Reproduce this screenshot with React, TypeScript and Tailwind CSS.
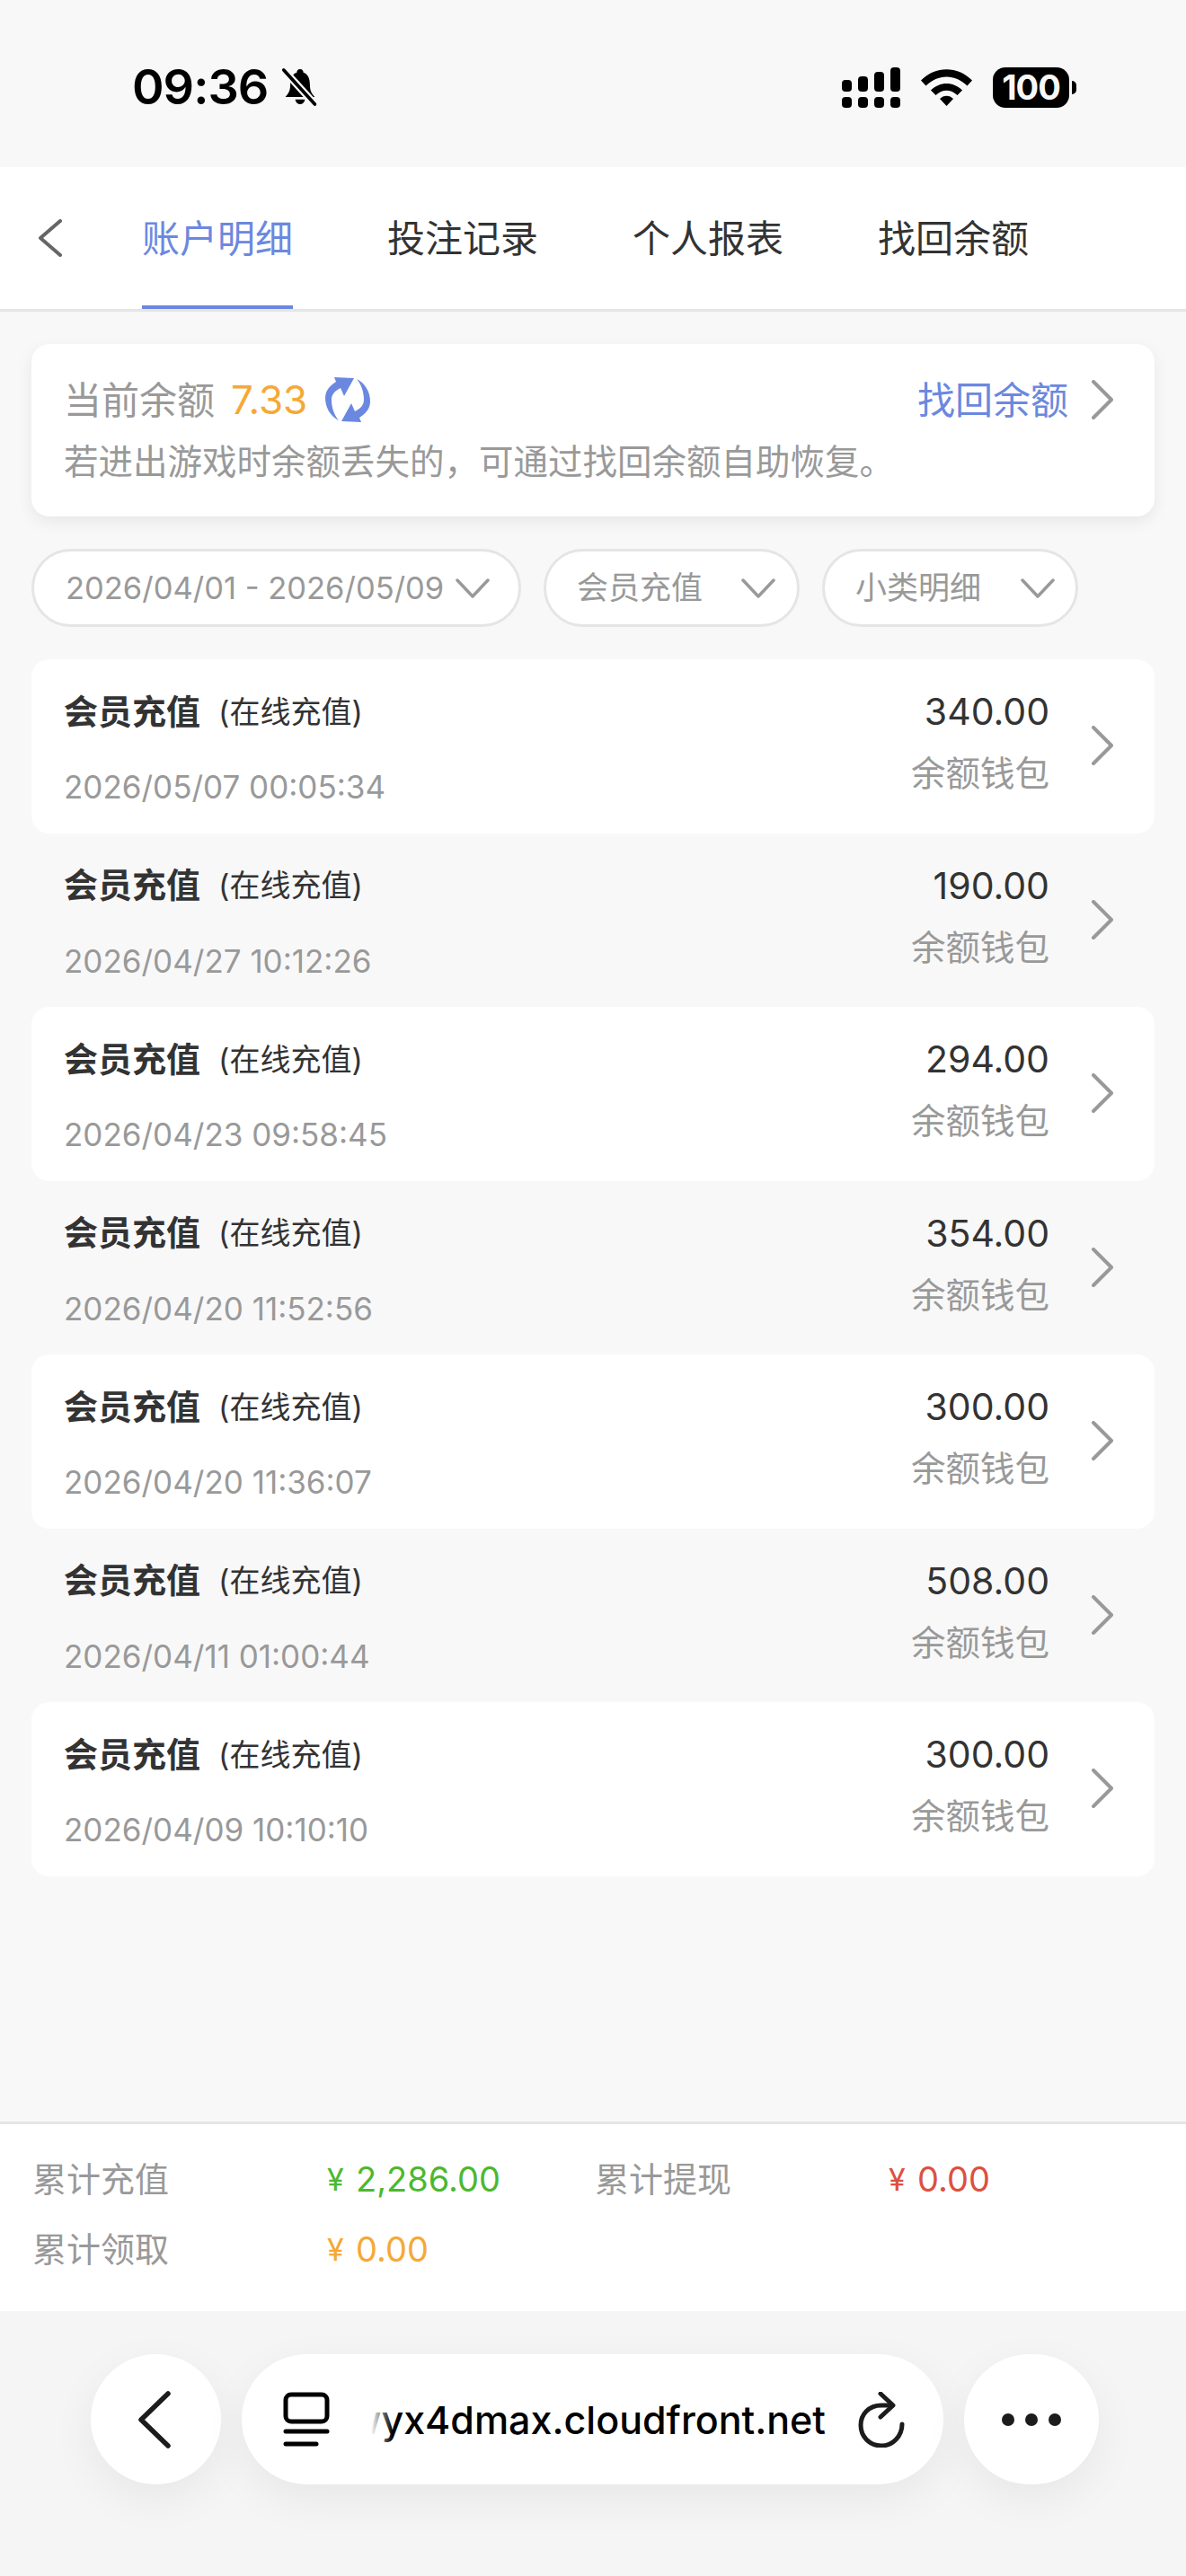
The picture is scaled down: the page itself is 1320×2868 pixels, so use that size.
const records = [
  { amount: "340.00", time: "2026/05/07 00:05:34" },
  { amount: "190.00", time: "2026/04/27 10:12:26" },
  { amount: "294.00", time: "2026/04/23 09:58:45" },
  { amount: "354.00", time: "2026/04/20 11:52:56" },
  { amount: "300.00", time: "2026/04/20 11:36:07" },
  { amount: "508.00", time: "2026/04/11 01:00:44" },
  { amount: "300.00", time: "2026/04/09 10:10:10" },
];

const tabs = ["账户明细", "投注记录", "个人报表", "找回余额"];

function ChevronRight({ className = "" }: { className?: string }) {
  return (
    <svg viewBox="0 0 26 44" className={`w-[26px] h-[44px] shrink-0 ${className}`} fill="none" stroke="#999999" strokeWidth="4" strokeLinecap="round" strokeLinejoin="round">
      <path d="M3 2 L23 22 L3 42" />
    </svg>
  );
}

function ChevronDown() {
  return (
    <svg viewBox="0 0 38 22" className="w-[38px] h-[22px] shrink-0" fill="none" stroke="#999999" strokeWidth="3.5" strokeLinecap="round" strokeLinejoin="round">
      <path d="M2 2 L19 20 L36 2" />
    </svg>
  );
}

function StatusIcons() {
  return (
    <div className="flex items-center">
      <svg viewBox="0 0 65 45" className="w-[65px] h-[45px]" fill="#000">
        <rect x="0" y="14" width="11" height="13" rx="4" />
        <rect x="18" y="10" width="11" height="17" rx="4" />
        <rect x="36" y="5" width="11" height="22" rx="4" />
        <rect x="54" y="0" width="11" height="27" rx="4" />
        <rect x="0" y="33" width="11" height="12" rx="4" />
        <rect x="18" y="33" width="11" height="12" rx="4" />
        <rect x="36" y="33" width="11" height="12" rx="4" />
        <rect x="54" y="33" width="11" height="12" rx="4" />
      </svg>
      <svg viewBox="0 0 57 41" className="w-[57px] h-[41px] ml-[23px]" fill="#000">
        <path d="M0 12.5 C16 -4 41 -4 57 12.5 L51.5 18.5 C38 5 19 5 5.5 18.5 Z" />
        <path d="M11 23.5 C21 13.5 36 13.5 46 23.5 L40.5 29 C33 22 24 22 16.5 29 Z" />
        <path d="M21 33 C25 28.5 32 28.5 36 33 L28.5 41 Z" />
      </svg>
      <div className="ml-[23px] flex items-center">
        <div className="w-[85px] h-[45px] rounded-[14px] bg-black text-[#f8f8f8] text-[38px] leading-[45px] font-bold text-center tracking-[-1px]">100</div>
        <div className="w-[5px] h-[15px] ml-[3px] rounded-r-full bg-black" />
      </div>
    </div>
  );
}

function RefreshMark() {
  const arm = "M15 49 C5 44 0 34 0 24 C0 17 4 11 12 6 L10 1 L32 2 L21 22 L17 13 C11 16 7 20 7 26 C7 35 10 43 15 49 Z";
  return (
    <svg viewBox="0 0 50 52" className="w-[50px] h-[52px] ml-5" fill="#6b88e0">
      <path d={arm} />
      <path d={arm} transform="rotate(180 25 26)" />
    </svg>
  );
}

function Yen({ value, color }: { value: string; color: string }) {
  return (
    <span className={`flex items-center self-start h-[46px] text-[38px] ${color}`}>
      <span className="text-[34px] w-8">¥</span>
      {value}
    </span>
  );
}

export default function App() {
  return (
    <div className="w-[1320px] h-[2868px] flex flex-col bg-[#f8f8f8] overflow-hidden font-[Inter,'Noto_Sans_CJK_SC',sans-serif]">
      {/* status bar */}
      <div className="h-[186px] shrink-0 flex items-center justify-between pl-[147px] pr-[122px] pt-2">
        <div className="flex items-center">
          <span className="text-[54px] leading-[60px] font-semibold text-black tracking-[-1px]">09:36</span>
          <svg viewBox="0 0 44 46" className="w-10 h-[46px] ml-4" fill="#000">
            <path d="M22 1 C25 1 26 3 26 5 C32 7 34 13 34 20 C34 27 36 31 40 35 L4 35 C8 31 10 27 10 20 C10 13 12 7 18 5 C18 3 19 1 22 1 Z" />
            <path d="M16 38 L28 38 C27 42 25 44 22 44 C19 44 17 42 16 38 Z" />
            <path d="M2 2 L40 44" stroke="#f8f8f8" strokeWidth="9" />
            <path d="M2 2 L40 44" stroke="#000" strokeWidth="4" strokeLinecap="round" />
          </svg>
        </div>
        <StatusIcons />
      </div>

      {/* tabs */}
      <div className="h-[161px] shrink-0 bg-white border-b-[3px] border-[#e5e5e5] flex items-center pl-[42px]">
        <svg viewBox="0 0 27 42" className="w-[27px] h-[42px]" fill="none" stroke="#666666" strokeWidth="4" strokeLinecap="round" strokeLinejoin="round">
          <path d="M25 2 L3 21 L25 40" />
        </svg>
        <div className="flex h-full ml-[89px] gap-[105px]">
          {tabs.map((t, i) => (
            <div
              key={t}
              className={`flex items-center h-full text-[42px] border-y-4 border-t-transparent ${i === 0 ? "text-[#6b88e0] border-b-[#6b88e0]" : "text-[#333333] border-b-transparent"}`}
            >
              {t}
            </div>
          ))}
        </div>
      </div>

      {/* balance */}
      <div className="mx-[35px] mt-9 h-[192px] shrink-0 bg-white rounded-[20px] shadow-[0_6px_18px_rgba(0,0,0,0.07)] pl-9 pr-[45px] pt-9 flex flex-col">
        <div className="flex items-center justify-between h-[52px]">
          <div className="flex items-center">
            <span className="text-[42px] text-[#999999]">当前余额</span>
            <span className="text-[44px] text-[#f5a935] ml-[18px]">7.33</span>
            <RefreshMark />
          </div>
          <div className="flex items-center">
            <span className="text-[42px] text-[#6b88e0]">找回余额</span>
            <ChevronRight className="ml-[25px]" />
          </div>
        </div>
        <div className="mt-5 text-[38.5px] leading-[46px] text-[#999999] whitespace-nowrap">若进出游戏时余额丢失的，可通过找回余额自助恢复。</div>
      </div>

      {/* filters */}
      <div className="mx-[35px] mt-9 flex gap-[25px] shrink-0">
        <div className="w-[545px] h-[87px] rounded-full bg-white border-[3px] border-[#e5e5e5] flex items-center justify-between pl-[35px] pr-[32px] text-[34.5px] text-[#999999]">
          <span className="whitespace-nowrap">2026/04/01 - 2026/05/09</span>
          <ChevronDown />
        </div>
        <div className="w-[285px] h-[87px] rounded-full bg-white border-[3px] border-[#e5e5e5] flex items-center justify-between pl-[34px] pr-6 text-[35px] text-[#999999]">
          <span>会员充值</span>
          <ChevronDown />
        </div>
        <div className="w-[285px] h-[87px] rounded-full bg-white border-[3px] border-[#e5e5e5] flex items-center justify-between pl-[34px] pr-[23px] text-[35px] text-[#999999]">
          <span>小类明细</span>
          <ChevronDown />
        </div>
      </div>

      {/* records */}
      <div className="mx-[35px] mt-9 flex-1 flex flex-col">
        {records.map((r, i) => (
          <div key={i} className={`h-[193.5px] shrink-0 rounded-[20px] pl-9 pr-[45px] pt-[35px] flex ${i % 2 === 0 ? "bg-white" : ""}`}>
            <div className="flex-1">
              <div className="flex items-center h-[46px] text-[#333333]">
                <span className="text-[38px] font-bold">会员充值</span>
                <span className="text-[34px] ml-5">(在线充值)</span>
              </div>
              <div className="mt-[38px] text-[35px] leading-[46px] text-[#999999]">{r.time}</div>
            </div>
            <div className="text-right">
              <div className="text-[41px] leading-[46px] text-[#333333]">{r.amount}</div>
              <div className="mt-[23px] text-[38.5px] leading-[46px] text-[#999999]">余额钱包</div>
            </div>
            <ChevronRight className="ml-[46px] mt-[39px]" />
          </div>
        ))}
      </div>

      {/* totals */}
      <div className="h-[211px] shrink-0 bg-white border-t-[3px] border-[#e5e5e5] pl-9 pt-[38px] grid grid-cols-[328px_298px_327px_1fr] auto-rows-[78px]">
        <span className="text-[38px] leading-[46px] text-[#999999]">累计充值</span>
        <Yen value="2,286.00" color="text-[#4cb82e]" />
        <span className="text-[38px] leading-[46px] text-[#999999]">累计提现</span>
        <Yen value="0.00" color="text-[#dd5040]" />
        <span className="text-[38px] leading-[46px] text-[#999999]">累计领取</span>
        <Yen value="0.00" color="text-[#f5a935]" />
      </div>

      {/* browser bar */}
      <div className="h-[295px] shrink-0 bg-[#f5f5f5] pt-12 pl-[101px] flex gap-[23px]">
        <div className="w-[145px] h-[145px] rounded-full bg-white shadow-[0_16px_50px_rgba(0,0,0,0.06)] flex items-center justify-center">
          <svg viewBox="0 0 36 64" className="w-9 h-16 mr-1" fill="none" stroke="#1c1c1c" strokeWidth="5.5" strokeLinecap="round" strokeLinejoin="round">
            <path d="M33 3 L3 32 L33 61" />
          </svg>
        </div>
        <div className="w-[781px] h-[145px] rounded-full bg-white shadow-[0_16px_50px_rgba(0,0,0,0.06)] flex items-center pl-[46px]">
          <svg viewBox="0 0 52 62" className="w-[52px] h-[62px] shrink-0" fill="none" stroke="#000" strokeWidth="5" strokeLinecap="round" strokeLinejoin="round">
            <rect x="3" y="3" width="46" height="30" rx="6" />
            <path d="M3 44 L49 44" />
            <path d="M3 58 L37 58" />
          </svg>
          <div className="relative w-[506px] ml-[46px] overflow-hidden">
            <div className="flex justify-end text-[43px] leading-[56px] font-medium text-black whitespace-nowrap">wyx4dmax.cloudfront.net</div>
            <div className="absolute left-0 top-0 bottom-0 w-6 bg-gradient-to-r from-white to-transparent" />
          </div>
          <svg viewBox="0 0 52 62" className="w-[52px] h-[62px] ml-[36px] shrink-0" fill="none" stroke="#1c1c1c" strokeWidth="5" strokeLinecap="round" strokeLinejoin="round">
            <path d="M49 36 C49 50 38 60 26 60 C12 60 3 49 3 37 C3 25 12 15 26 15 L38 15" />
            <path d="M25 2 L39 15 L25 28" />
          </svg>
        </div>
        <div className="w-[150px] h-[145px] rounded-full bg-white shadow-[0_16px_50px_rgba(0,0,0,0.06)] flex items-center justify-center gap-[12px]">
          <span className="w-[14px] h-[14px] rounded-full bg-[#1c1c1c]" />
          <span className="w-[14px] h-[14px] rounded-full bg-[#1c1c1c]" />
          <span className="w-[14px] h-[14px] rounded-full bg-[#1c1c1c]" />
        </div>
      </div>
    </div>
  );
}
